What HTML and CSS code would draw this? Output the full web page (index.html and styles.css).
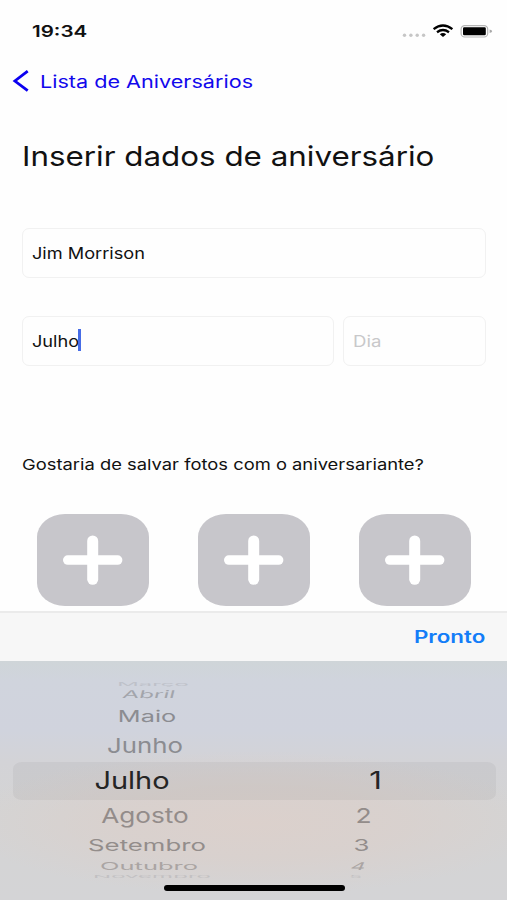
FILE: index.html
```html
<!DOCTYPE html>
<html lang="pt">
<head>
<meta charset="utf-8">
<title>Inserir dados de aniversário</title>
<link rel="stylesheet" href="styles.css">
</head>
<body>
<div class="screen">
  <header class="status">
    <span class="wide time">19:34</span>
    <svg class="status-icons" width="92" height="16" viewBox="0 0 92 16">
      <g fill="#c6c6c6"><circle cx="3.5" cy="12.3" r="1.7"/><circle cx="9.9" cy="12.3" r="1.7"/><circle cx="16.2" cy="12.3" r="1.7"/><circle cx="22.6" cy="12.3" r="1.7"/></g>
      <g fill="none" stroke="#000" stroke-width="2.3"><path d="M32.6 6.1Q42 -1.1 51.4 6.1"/><path d="M36 9.2Q42 4.8 48 9.2"/></g>
      <path d="M38.8 11.2Q42 8.9 45.2 11.2L42 13.9Z"/>
      <rect x="60.1" y="2.6" width="26.6" height="11.4" rx="3.6" fill="#fff" stroke="#b5b5b5" stroke-width="1.2"/>
      <rect x="62" y="4.3" width="22.8" height="8" rx="1.2"/>
      <path d="M88.6 6.5Q91.2 7 91.2 8.3T88.6 10.1Z" fill="#a8a8a8"/>
    </svg>
  </header>
  <nav class="nav">
    <svg width="18" height="24" viewBox="0 0 18 24"><path d="M15.7 2.2 2.9 12 15.7 21.7" fill="none" stroke="#0c00f0" stroke-width="2.8"/></svg>
    <a class="wide back">Lista de Aniversários</a>
  </nav>
  <main class="form">
    <h1 class="wide title">Inserir dados de aniversário</h1>
    <div class="field name"><span class="wide name-text">Jim Morrison</span></div>
    <div class="row">
      <div class="field month"><span class="wide month-text">Julho</span><i class="caret"></i></div>
      <div class="field day"><span class="wide placeholder">Dia</span></div>
    </div>
    <p class="wide question">Gostaria de salvar fotos com o aniversariante?</p>
    <div class="photos">
      <div class="tile"><svg width="60" height="50" viewBox="0 0 60 50"><rect y="20.3" width="59.4" height="9.5" rx="4.8"/><rect x="24.2" y="0.5" width="11" height="49.3" rx="5.5"/></svg></div>
      <div class="tile"><svg width="60" height="50" viewBox="0 0 60 50"><rect y="20.3" width="59.4" height="9.5" rx="4.8"/><rect x="24.2" y="0.5" width="11" height="49.3" rx="5.5"/></svg></div>
      <div class="tile"><svg width="60" height="50" viewBox="0 0 60 50"><rect y="20.3" width="59.4" height="9.5" rx="4.8"/><rect x="24.2" y="0.5" width="11" height="49.3" rx="5.5"/></svg></div>
    </div>
  </main>
  <div class="toolbar"><span class="wide done">Pronto</span></div>
  <section class="picker">
    <div class="selection"></div>
    <div class="wheel months">
      <span class="m0">Março</span><span class="m1">Abril</span><span class="m2">Maio</span><span class="m3">Junho</span><span class="m4">Julho</span><span class="m5">Agosto</span><span class="m6">Setembro</span><span class="m7">Outubro</span><span class="m8">Novembro</span>
    </div>
    <div class="wheel days">
      <span class="d4">1</span><span class="d5">2</span><span class="d6">3</span><span class="d7">4</span><span class="d8">5</span>
    </div>
    <div class="home"></div>
  </section>
</div>
</body>
</html>
```
FILE: styles.css
```css
* { box-sizing: border-box; }
body { margin: 0; background: #fefefe; font-family: Inter, "Liberation Sans", sans-serif; color: #111; }
.screen { width: 507px; height: 900px; overflow: hidden; display: flex; flex-direction: column; }
.wide { display: block; width: max-content; white-space: nowrap; transform-origin: 0 50%; }

.status { height: 62px; padding: 0 14px 0 32px; display: flex; align-items: center; justify-content: space-between; }
.time { font-size: 16px; font-weight: 600; transform: scaleX(1.285); }
.status-icons { display: block; margin-top: -1px; }

.nav { height: 38px; padding-left: 12px; display: flex; align-items: center; }
.nav svg { display: block; flex: none; margin-top: -1px; }
.back { margin-left: 9.5px; font-size: 17.4px; color: #1208ec; transform: translateY(-.5px) scaleX(1.242); }

.form { height: 511px; padding: 0 21px 0 22px; }
.title { margin: 0; height: 128px; font-size: 27.5px; font-weight: 400; line-height: 112px; transform: scaleX(1.14); }
.field { height: 50px; border: 1.5px solid #f1f1f1; border-radius: 7px; display: flex; align-items: center; padding-left: 9px; font-size: 15.5px; position: relative; }
.name-text { transform: scaleX(1.172); }
.row { margin-top: 38px; display: grid; grid-template-columns: 312px 143px; gap: 9px; }
.month-text { transform: scaleX(1.17); }
.placeholder { color: #c8c8ca; transform: scaleX(1.2); }
.caret { position: absolute; left: 54.5px; top: 12px; width: 3px; height: 22px; background: #466ce6; }
.question { margin: 88px 0 0; height: 22px; font-size: 15px; line-height: 22px; transform: scaleX(1.224); }
.photos { margin: 38px 0 0 15px; display: flex; gap: 49px; }
.tile { width: 112px; height: 92px; border-radius: 28px / 23px; background: #c7c6cb; display: flex; align-items: center; justify-content: center; }
.tile svg { display: block; fill: #fff; }

.toolbar { height: 50px; background: #f7f7f7; border-top: 2px solid #ebebeb; display: flex; align-items: center; justify-content: flex-end; padding-right: 22px; }
.done { font-size: 17px; font-weight: 600; color: #137df8; transform: scaleX(1.315); transform-origin: 100% 50%; }

.picker { position: relative; height: 239px; padding-top: 19px; display: flex; background:
  radial-gradient(ellipse 290px 72px at 50% 162px, rgba(220,208,203,.9), rgba(218,208,204,.75) 50%, rgba(212,212,212,0)),
  linear-gradient(#cfd5d8, #d0d4dd 20px, #d0d3dd 70px, #d3d3d7 100px, #d4d4d4 150px, #d4d4d6); }
.selection { position: absolute; left: 13px; top: 101px; width: 483px; height: 38px; border-radius: 9px / 7px; background: rgba(90,90,95,.075); }
.wheel { position: relative; display: grid; grid-template-columns: 100%; grid-template-rows: 8px 13px 30px 30px 40px 29px 30px 13px 8px; height: 201px; font-size: 23px; color: #8b8c91; }
.months { width: 294px; }
.days { width: 139px; }
.wheel span { display: flex; align-items: center; justify-content: center; line-height: 0; white-space: nowrap; }
.m0 { transform: translateX(6px) scale(1.04, .2); opacity: .25; }
.m1 { transform: translateX(2px) scale(1.05, .46) skewX(-6deg); opacity: .65; }
.m2 { transform: scale(1.1, .7); }
.m3 { transform: translateX(-2px) scale(1.12, .9); }
.m4 { transform: translateX(-15px) scale(1.26, 1.03); color: #252525; }
.m5 { transform: translateX(-2px) scale(1.137, .9); color: #938c8a; }
.m6 { transform: scale(1.12, .7); color: #938d8b; }
.m7 { transform: translateX(2px) scale(1.105, .47); color: #938d8b; opacity: .65; }
.m8 { transform: translateX(5px) scale(1.045, .16); opacity: .25; }
.d4 { grid-row: 5; transform: translateX(12px) scale(1.35, 1.03); color: #252525; }
.d5 { grid-row: 6; transform: scale(1.15, .9); color: #938c8a; }
.d6 { grid-row: 7; transform: translateX(-2px) scale(1.12, .7); color: #938d8b; }
.d7 { grid-row: 8; transform: translateX(-5px) scale(1, .46) skewX(-12deg); color: #938d8b; opacity: .65; }
.d8 { grid-row: 9; transform: translateX(-8px) scale(.9, .16); opacity: .25; }
.home { position: absolute; left: 164px; top: 224px; width: 181px; height: 6px; border-radius: 3px; background: #000; }
```
